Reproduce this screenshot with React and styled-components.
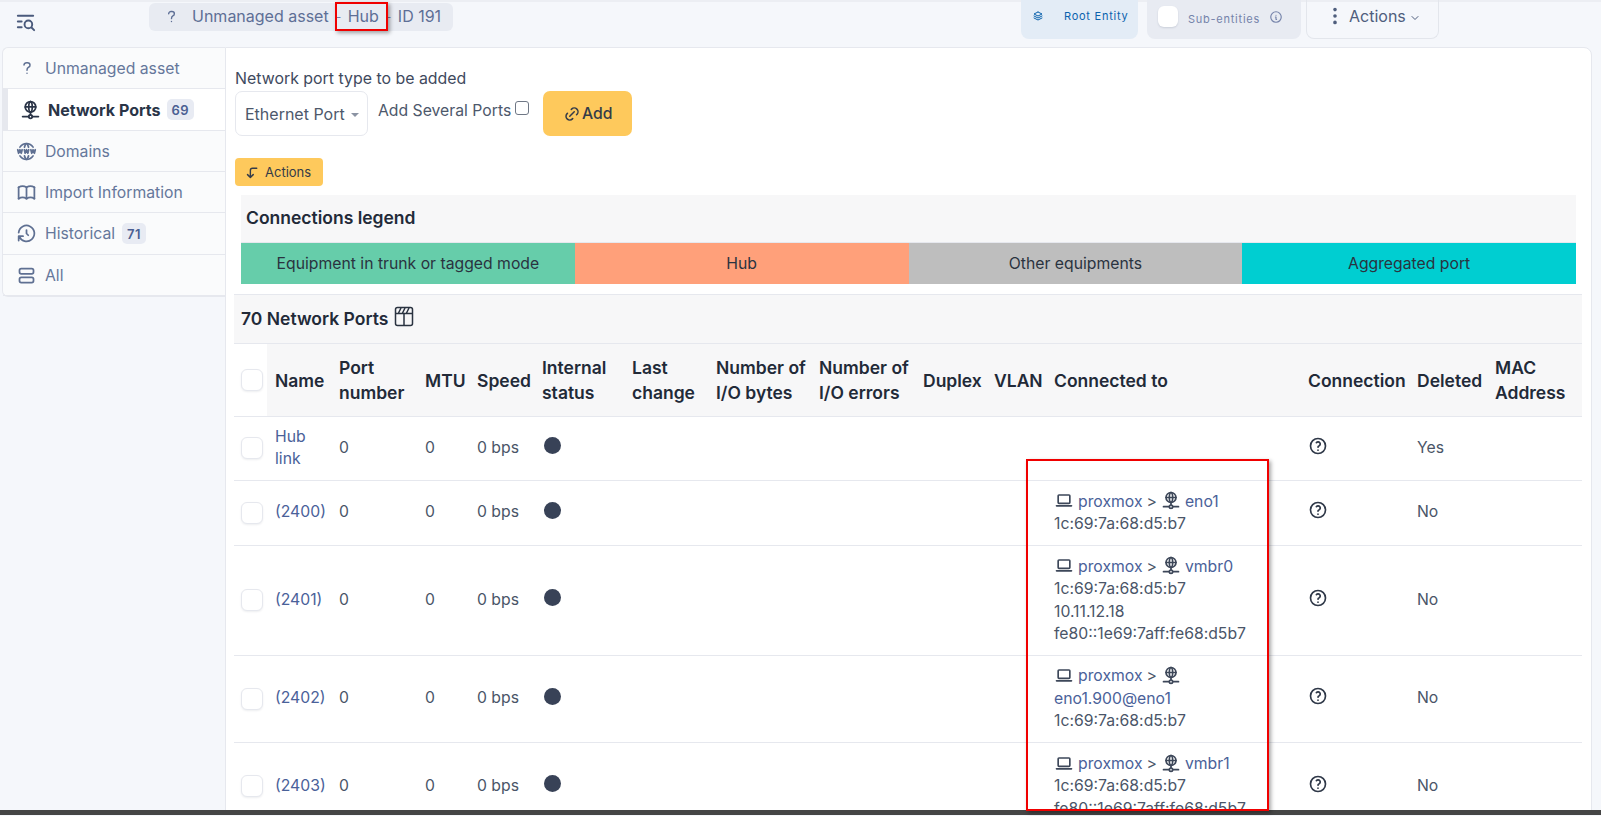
import React from "react";
import styled, { createGlobalStyle } from "styled-components";
import {
  TbListSearch,
  TbQuestionMark,
  TbNetwork,
  TbWorldWww,
  TbBook,
  TbHistory,
  TbLayoutList,
  TbStack2,
  TbInfoCircle,
  TbDotsVertical,
  TbChevronDown,
  TbLink,
  TbCornerLeftDown,
  TbDeviceLaptop,
  TbHelp,
} from "react-icons/tb";

const GlobalStyle = createGlobalStyle`
  html, body {
    margin: 0;
    padding: 0;
    height: 100%;
    overflow: hidden;
    background: #f5f7fb;
    font-family: Inter, "Liberation Sans", sans-serif;
    font-size: 15.75px;
    color: #3b4558;
  }
  * { box-sizing: border-box; }
`;

const Page = styled.div`
  position: relative;
  width: 1601px;
  height: 816px;
  overflow: hidden;
`;

const Shell = styled.div`
  height: 810px;
  overflow: hidden;
`;

const BottomBar = styled.div`
  height: 5px;
  background: #454545;
`;

const Header = styled.header`
  height: 47px;
  display: flex;
  align-items: flex-start;
  border-top: 2px solid #eceef3;
  padding-left: 14px;
`;

const MenuIcon = styled.div`
  display: flex;
  color: #4a5a7c;
  font-size: 23px;
  margin-top: 8px;
  margin-right: 112px;
`;

const Crumbs = styled.div`
  height: 28px;
  margin-top: 1px;
  width: 304px;
  padding: 0 0 2px 14px;
  display: flex;
  align-items: center;
  gap: 7px;
  background: #e8ebf2;
  border-radius: 6px;
  color: #5e6f96;
  font-size: 16px;
`;

const CrumbIcon = styled.span`
  display: flex;
  margin-right: 5px;
`;

const CrumbText = styled.span`
  white-space: nowrap;
`;

const CrumbSep = styled.span`
  width: 5px;
  font-size: 12px;
  color: #7583aa;
`;

const HeaderRight = styled.div`
  display: flex;
  margin-left: auto;
  margin-right: 162px;
  margin-top: -2px;
`;

const EntityButton = styled.div`
  width: 117px;
  height: 39px;
  display: flex;
  align-items: center;
  padding: 0 0 7px 11px;
  gap: 20px;
  background: #e3ecf6;
  border-radius: 0 0 8px 8px;
  color: #0a62ad;
  font-size: 11px;
  font-weight: 400;
  letter-spacing: 0.75px;
`;

const SubEntityButton = styled.div`
  width: 154px;
  height: 39px;
  margin-left: 9px;
  display: flex;
  align-items: center;
  padding: 0 0 2px 11px;
  background: #e8ebf2;
  border-radius: 0 0 8px 8px;
  color: #7583aa;
  font-size: 11px;
  font-weight: 400;
  letter-spacing: 0.75px;
`;

const Toggle = styled.span`
  width: 20px;
  height: 21px;
  margin-right: 10px;
  margin-top: -4px;
  background: #fff;
  border-radius: 6px;
  box-shadow: 0 1px 2px rgba(30, 40, 70, 0.14);
`;

const InfoIcon = styled.span`
  display: flex;
  margin-left: 9px;
  font-size: 14px;
  margin-top: -4px;
`;

const ActionsButton = styled.div`
  width: 133px;
  height: 39px;
  margin-left: 5px;
  display: flex;
  align-items: center;
  padding: 0 0 7px 17px;
  gap: 3px;
  border: 1px solid #e3e6ec;
  border-top: 0;
  border-radius: 0 0 8px 8px;
  color: #4f5e7d;
  font-size: 16px;
`;

const ActionsChevron = styled.span`
  display: flex;
  margin-top: 5px;
`;

const Body = styled.div`
  display: flex;
  padding: 0 9px 0 2px;
`;

const Sidebar = styled.nav`
  width: 223px;
  flex-shrink: 0;
  align-self: flex-start;
  display: flex;
  flex-direction: column;
  background: #fafbfc;
  border: 1px solid #e6e8ee;
  border-right: 0;
  border-radius: 6px 0 0 6px;
`;

const Tab = styled.div`
  height: ${(p) => (p.$tall ? 42 : 41)}px;
  display: flex;
  align-items: center;
  gap: ${(p) => (p.$active ? 7 : 8)}px;
  padding-left: ${(p) => (p.$active ? 12 : 13)}px;
  color: ${(p) => (p.$active ? "#2a3447" : "#65779b")};
  font-weight: ${(p) => (p.$active ? 700 : 400)};
  background: ${(p) => (p.$active ? "#fff" : "transparent")};
  border-left: ${(p) => (p.$active ? "5px solid #e6e8ee" : "0")};
  border-bottom: 1px solid #e6e8ee;
  font-size: ${(p) => (p.$active ? 16 : 15.75)}px;
`;

const TabIcon = styled.span`
  display: flex;
  font-size: 21px;
  width: 21px;
  justify-content: center;
  color: ${(p) => (p.$active ? "#2a3447" : "#5f7092")};
`;

const Badge = styled.span`
  padding: 2px 5px;
  height: 21px;
  margin-left: -1px;
  display: flex;
  align-items: center;
  background: #e8ebf3;
  border-radius: 5px;
  color: #4b5f92;
  font-size: 13px;
  font-weight: 600;
  letter-spacing: 0.4px;
`;

const Main = styled.main`
  flex: 1;
  height: 770px;
  background: #fff;
  border: 1px solid #e6e8ee;
  border-radius: 0 8px 0 0;
  padding: 21px 9px 0 8px;
`;

const FormBlock = styled.div`
  padding-left: 1px;
`;

const FieldLabel = styled.div`
  height: 22px;
  font-size: 15.9px;
  line-height: 20px;
  color: #3f4a5e;
`;

const AddRow = styled.div`
  display: flex;
  align-items: flex-start;
`;

const SelectBox = styled.div`
  width: 133px;
  height: 45px;
  display: flex;
  align-items: center;
  padding-left: 9px;
  gap: 6px;
  border: 1px solid #e6e8ee;
  border-radius: 7px;
  font-size: 16px;
  color: #4d586b;
`;

const Caret = styled.span`
  width: 0;
  height: 0;
  margin-top: 3px;
  border-left: 4px solid transparent;
  border-right: 4px solid transparent;
  border-top: 4px solid #8b93a3;
`;

const SeveralLabel = styled.label`
  display: flex;
  align-items: center;
  margin-left: 10px;
  height: 38px;
  font-size: 15.75px;
  color: #4d586b;
  white-space: nowrap;
`;

const CheckBox = styled.span`
  width: 14px;
  height: 14px;
  margin: -4px 0 0 4px;
  border: 1px solid #6f7785;
  border-radius: 3px;
  background: #fff;
`;

const AddButton = styled.div`
  width: 89px;
  height: 45px;
  margin-left: 14px;
  display: flex;
  align-items: center;
  justify-content: center;
  gap: 1px;
  background: #fec95c;
  border-radius: 7px;
  color: #343b48;
  font-size: 15.75px;
  font-weight: 500;
`;

const MassiveButton = styled.div`
  width: 88px;
  height: 28px;
  margin-top: 22px;
  display: flex;
  align-items: center;
  padding-left: 9px;
  gap: 4px;
  background: #fec95c;
  border-radius: 4px;
  color: #343b48;
  font-size: 13px;
`;

const Legend = styled.section`
  margin: 9px 6px 0 7px;
`;

const LegendTitle = styled.div`
  height: 48px;
  display: flex;
  align-items: center;
  padding: 0 0 2px 5px;
  background: #f7f7f8;
  border-bottom: 1px solid #e6e8ee;
  color: #222a38;
  font-size: 17.5px;
  font-weight: 600;
`;

const LegendRow = styled.div`
  display: grid;
  grid-template-columns: repeat(4, 1fr);
  height: 41px;
`;

const LegendCell = styled.div`
  display: flex;
  align-items: center;
  justify-content: center;
  background: ${(p) => p.$color};
  color: #2a3340;
  font-size: 15.75px;
`;

const TableTitle = styled.div`
  height: 50px;
  margin-top: 10px;
  display: flex;
  align-items: center;
  gap: 6px;
  padding: 0 0 2px 7px;
  background: #f7f7f8;
  border-top: 1px solid #e6e8ee;
  border-bottom: 1px solid #e6e8ee;
  color: #222a38;
  font-size: 17.5px;
  font-weight: 600;
`;

const TitleIcon = styled.span`
  display: flex;
  margin-top: -3px;
`;

const Table = styled.table`
  width: 1348px;
  table-layout: fixed;
  border-collapse: collapse;
  font-size: 15.75px;
`;

const HeadCell = styled.th`
  height: 72px;
  padding: 1px 8px 0;
  text-align: left;
  vertical-align: middle;
  background: #f7f7f8;
  color: #222a38;
  font-size: 17.5px;
  font-weight: 600;
  line-height: 25px;
  white-space: nowrap;
  border-bottom: 1px solid #e6e8ee;
  &:first-child {
    background: #fff;
  }
`;

const Row = styled.tr`
  height: ${(p) => p.$height}px;
`;

const Cell = styled.td`
  padding: 0 8px;
  vertical-align: middle;
  line-height: 22.5px;
  color: #4a5568;
  font-size: 15.75px;
  border-bottom: 1px solid #e6e8ee;
`;

const RowBox = styled.span`
  display: block;
  width: 22px;
  height: 22px;
  margin-left: -1px;
  background: #fff;
  border: 1px solid #e6e8ee;
  border-radius: 6px;
  box-shadow: 0 1px 2px rgba(30, 40, 70, 0.08);
`;

const PortLink = styled.span`
  color: #4a6199;
`;

const Dot = styled.span`
  display: block;
  width: 17px;
  height: 17px;
  margin: -5px 0 0 2px;
  background: #384257;
  border-radius: 50%;
`;

const DeviceLine = styled.div`
  display: flex;
  align-items: center;
  flex-wrap: wrap;
  gap: 4px;
  margin-top: 1px;
`;

const DeviceIcon = styled.span`
  display: flex;
  font-size: 20px;
  color: #3d4759;
  margin-top: -3px;
`;

const HelpIcon = styled.span`
  display: flex;
  font-size: 20px;
  margin: -5px 0 0 0;
  color: #2f3848;
`;

const Annotation = styled.div`
  position: absolute;
  left: ${(p) => p.$left}px;
  top: ${(p) => p.$top}px;
  width: ${(p) => p.$width}px;
  height: ${(p) => p.$height}px;
  border: 2px solid #f00000;
  box-shadow: 2px 2px 4px rgba(0, 0, 0, 0.35);
  pointer-events: none;
`;

const tabs = [
  { label: "Network Ports", icon: TbNetwork, badge: "69", active: true },
  { label: "Domains", icon: TbWorldWww },
  { label: "Import Information", icon: TbBook },
  { label: "Historical", icon: TbHistory, badge: "71" },
  { label: "All", icon: TbLayoutList },
];

const legend = [
  ["Equipment in trunk or tagged mode", "#66cdaa"],
  ["Hub", "#ffa07a"],
  ["Other equipments", "#bebebe"],
  ["Aggregated port", "#00ced1"],
];

const colWidths = [33, 64, 86, 52, 65, 90, 84, 103, 104, 71, 60, 254, 109, 78, 95];

const headers = [
  "",
  "Name",
  ["Port", "number"],
  "MTU",
  "Speed",
  ["Internal", "status"],
  ["Last", "change"],
  ["Number of", "I/O bytes"],
  ["Number of", "I/O errors"],
  "Duplex",
  "VLAN",
  "Connected to",
  "Connection",
  "Deleted",
  ["MAC", "Address"],
];

const mac = "1c:69:7a:68:d5:b7";

const rows = [
  { name: "Hub link", height: 64, deleted: "Yes" },
  { name: "(2400)", height: 65, port: "eno1", lines: [mac] },
  {
    name: "(2401)",
    height: 110,
    port: "vmbr0",
    lines: [mac, "10.11.12.18", "fe80::1e69:7aff:fe68:d5b7"],
  },
  { name: "(2402)", height: 87, nextLine: "eno1.900@eno1", lines: [mac] },
  {
    name: "(2403)",
    height: 88,
    port: "vmbr1",
    lines: [mac, "fe80::1e69:7aff:fe68:d5b7"],
  },
];

const ClapIcon = () => (
  <svg width="20" height="21" viewBox="0 0 20 21" fill="none" stroke="#2a3340" strokeWidth="1.5">
    <rect x="1.5" y="1.5" width="17" height="18" rx="2" />
    <path d="M1.5 7.5h17M10 7.5v12M4.5 7l2.5-5M8.5 7L11 2M12.5 7L15 2" />
  </svg>
);

const Connected = ({ row }) => {
  if (!row.lines) return null;
  return (
    <>
      <DeviceLine>
        <DeviceIcon>
          <TbDeviceLaptop />
        </DeviceIcon>
        <PortLink>proxmox</PortLink>
        <span>&gt;</span>
        <DeviceIcon>
          <TbNetwork />
        </DeviceIcon>
        {row.port && <PortLink>{row.port}</PortLink>}
      </DeviceLine>
      {row.nextLine && (
        <div>
          <PortLink>{row.nextLine}</PortLink>
        </div>
      )}
      {row.lines.map((line) => (
        <div key={line}>{line}</div>
      ))}
    </>
  );
};

const App = () => {
  return (
    <Page>
      <GlobalStyle />
      <Shell>
        <Header>
          <MenuIcon>
            <TbListSearch />
          </MenuIcon>
          <Crumbs>
            <CrumbIcon>
              <TbQuestionMark size={17} />
            </CrumbIcon>
            <CrumbText>Unmanaged asset</CrumbText>
            <CrumbSep>-</CrumbSep>
            <CrumbText>Hub</CrumbText>
            <CrumbSep>-</CrumbSep>
            <CrumbText>ID 191</CrumbText>
          </Crumbs>
          <HeaderRight>
            <EntityButton>
              <TbStack2 size={12} />
              Root Entity
            </EntityButton>
            <SubEntityButton>
              <Toggle />
              Sub-entities
              <InfoIcon>
                <TbInfoCircle />
              </InfoIcon>
            </SubEntityButton>
            <ActionsButton>
              <TbDotsVertical size={22} />
              <span>Actions</span>
              <ActionsChevron>
                <TbChevronDown size={12} />
              </ActionsChevron>
            </ActionsButton>
          </HeaderRight>
        </Header>
        <Body>
          <Sidebar>
            <Tab>
              <TabIcon>
                <TbQuestionMark size={18} />
              </TabIcon>
              Unmanaged asset
            </Tab>
            {tabs.map((tab) => (
              <Tab key={tab.label} $active={tab.active} $tall={!!tab.badge}>
                <TabIcon $active={tab.active}>
                  <tab.icon />
                </TabIcon>
                {tab.label}
                {tab.badge && <Badge>{tab.badge}</Badge>}
              </Tab>
            ))}
          </Sidebar>
          <Main>
            <FormBlock>
              <FieldLabel>Network port type to be added</FieldLabel>
              <AddRow>
                <SelectBox>
                  Ethernet Port
                  <Caret />
                </SelectBox>
                <SeveralLabel>
                  Add Several Ports
                  <CheckBox />
                </SeveralLabel>
                <AddButton>
                  <TbLink size={18} />
                  Add
                </AddButton>
              </AddRow>
              <MassiveButton>
                <TbCornerLeftDown size={17} />
                Actions
              </MassiveButton>
            </FormBlock>
            <Legend>
              <LegendTitle>Connections legend</LegendTitle>
              <LegendRow>
                {legend.map(([label, color]) => (
                  <LegendCell key={label} $color={color}>
                    {label}
                  </LegendCell>
                ))}
              </LegendRow>
            </Legend>
            <TableTitle>
              70 Network Ports
              <TitleIcon>
                <ClapIcon />
              </TitleIcon>
            </TableTitle>
            <Table>
              <colgroup>
                {colWidths.map((w, i) => (
                  <col key={i} width={w} />
                ))}
              </colgroup>
              <thead>
                <tr>
                  {headers.map((h, i) => (
                    <HeadCell key={i}>
                      {i === 0 ? (
                        <RowBox />
                      ) : Array.isArray(h) ? (
                        <>
                          {h[0]}
                          <br />
                          {h[1]}
                        </>
                      ) : (
                        h
                      )}
                    </HeadCell>
                  ))}
                </tr>
              </thead>
              <tbody>
                {rows.map((row) => (
                  <Row key={row.name} $height={row.height}>
                    <Cell>
                      <RowBox />
                    </Cell>
                    <Cell>
                      <PortLink>{row.name}</PortLink>
                    </Cell>
                    <Cell>0</Cell>
                    <Cell>0</Cell>
                    <Cell>0 bps</Cell>
                    <Cell>
                      <Dot />
                    </Cell>
                    <Cell />
                    <Cell />
                    <Cell />
                    <Cell />
                    <Cell />
                    <Cell>
                      <Connected row={row} />
                    </Cell>
                    <Cell>
                      <HelpIcon>
                        <TbHelp />
                      </HelpIcon>
                    </Cell>
                    <Cell>{row.deleted || "No"}</Cell>
                    <Cell />
                  </Row>
                ))}
              </tbody>
            </Table>
          </Main>
        </Body>
      </Shell>
      <BottomBar />
      <Annotation $left={335} $top={2} $width={53} $height={29} />
      <Annotation $left={1026} $top={459} $width={243} $height={352} />
    </Page>
  );
};

export default App;
